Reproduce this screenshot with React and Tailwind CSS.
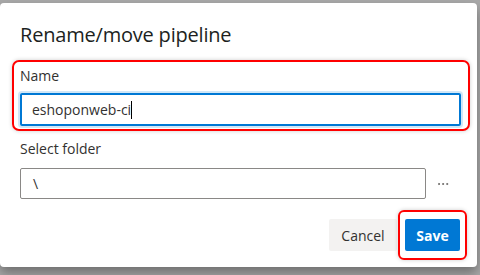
import { MoreHorizontal } from "lucide-react";

const App = () => {
  return (
    <div
      className="w-[480px] h-[275px] bg-[#a9a9a9] pt-[3px] overflow-hidden"
      style={{ fontFamily: '"Open Sans", "Noto Sans", sans-serif' }}
    >
      <div className="relative w-[477px] h-[264px] bg-white rounded-[4px] shadow-[0_6px_12px_rgba(0,0,0,0.35)] pl-5 pr-4 pt-[18px]">
        {/* Title */}
        <h1 className="text-[20px] leading-[28px] font-medium text-[#201f1e] tracking-[-0.2px]">
          Rename/move pipeline
        </h1>

        {/* Name */}
        <label className="block mt-[17px] text-[14px] leading-[20px] text-[#323130]">Name</label>
        <div className="mt-[7px] h-[33px] w-[441px] border-2 border-[#0078d4] rounded-[2px] shadow-[0_0_0_2px_rgba(0,120,212,0.18)] px-[10px] flex items-center text-[14px] text-[#323130]">
          <span>eshoponweb-ci</span>
          <span className="w-px h-[18px] bg-black" />
        </div>

        {/* Select folder */}
        <label className="block mt-[13px] text-[14px] leading-[20px] text-[#323130]">Select folder</label>
        <div className="mt-[9px] flex items-center">
          <div className="h-[31px] w-[406px] border border-[#8a8886] rounded-[2px] px-3 flex items-center text-[14px] text-[#323130]">
            \
          </div>
          <button className="w-[33px] h-[31px] flex items-center justify-center text-[#605e5c]">
            <MoreHorizontal size={14} strokeWidth={1.5} />
          </button>
        </div>

        {/* Buttons */}
        <div className="mt-[20px] flex justify-end gap-2 pr-px">
          <button className="h-[32px] w-[68px] bg-[#f3f2f1] rounded-[2px] text-[14px] font-medium text-[#323130]">
            Cancel
          </button>
          <button className="h-[32px] w-[55px] bg-[#0078d4] rounded-[2px] text-[14px] font-bold text-white">
            Save
          </button>
        </div>

        {/* annotation boxes */}
        <div className="absolute left-[12px] top-[57px] w-[458px] h-[71px] border-2 border-[#ff0000] rounded-[7px] shadow-[0_0_4px_rgba(0,0,0,0.2)]" />
        <div className="absolute left-[398px] top-[207px] w-[69px] h-[50px] border-2 border-[#ff0000] rounded-[6px] shadow-[0_0_4px_rgba(0,0,0,0.2)]" />
      </div>
    </div>
  );
};

export default App;
